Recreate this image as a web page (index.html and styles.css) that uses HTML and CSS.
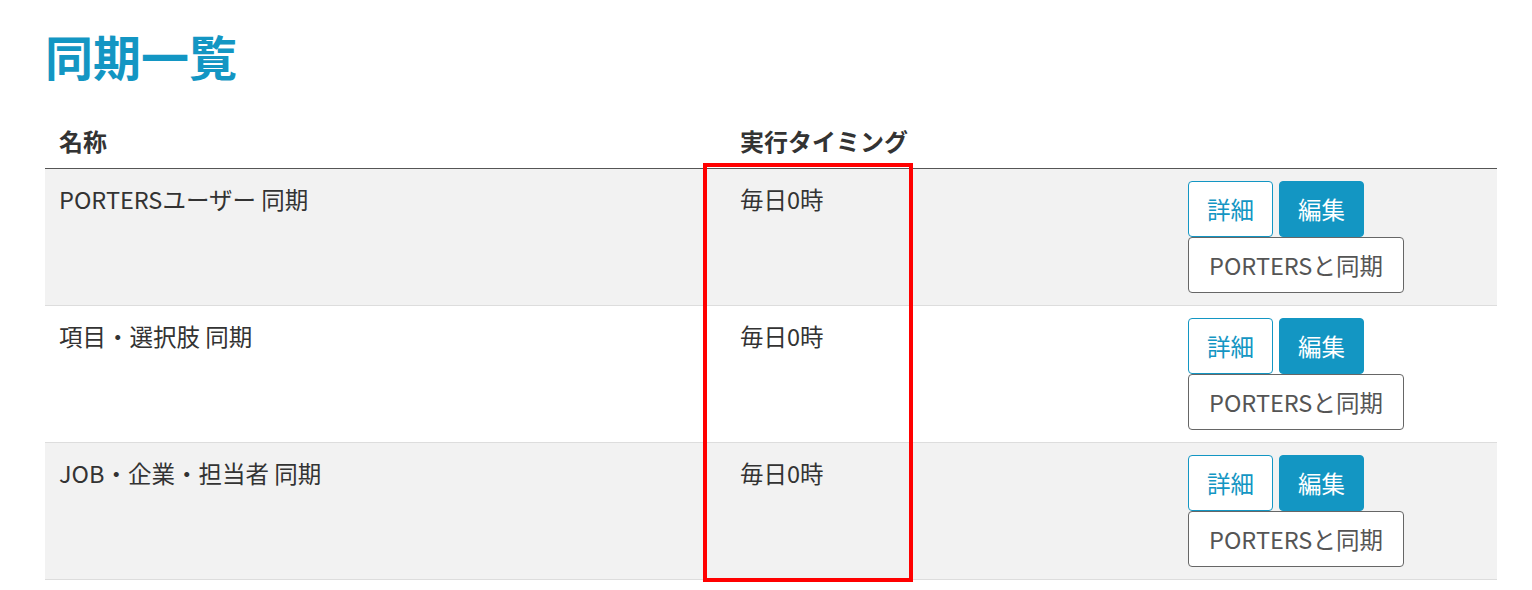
FILE: index.html
```html
<!DOCTYPE html>
<html lang="ja">
<head>
<meta charset="utf-8">
<link rel="stylesheet" href="styles.css">
</head>
<body>
<div class="page">
  <h1 class="title">同期一覧</h1>
  <table class="list">
    <colgroup><col class="c1"><col class="c2"><col class="c3"></colgroup>
    <thead>
      <tr><th>名称</th><th>実行タイミング</th><th></th></tr>
    </thead>
    <tbody>
      <tr class="odd">
        <td>PORTERSユーザー 同期</td><td>毎日0時</td>
        <td><div class="actions"><button class="btn btn-outline">詳細</button><button class="btn btn-primary">編集</button><button class="btn btn-default">PORTERSと同期</button></div></td>
      </tr>
      <tr>
        <td>項目・選択肢 同期</td><td>毎日0時</td>
        <td><div class="actions"><button class="btn btn-outline">詳細</button><button class="btn btn-primary">編集</button><button class="btn btn-default">PORTERSと同期</button></div></td>
      </tr>
      <tr class="odd">
        <td>JOB・企業・担当者 同期</td><td>毎日0時</td>
        <td><div class="actions"><button class="btn btn-outline">詳細</button><button class="btn btn-primary">編集</button><button class="btn btn-default">PORTERSと同期</button></div></td>
      </tr>
    </tbody>
  </table>
  <div class="highlight"></div>
</div>
</body>
</html>
```
FILE: styles.css
```css
* { box-sizing: border-box; }
body {
  margin: 0;
  font-family: "Noto Sans CJK JP", "Noto Sans", sans-serif;
  color: #333;
  background: #fff;
}
.page {
  position: relative;
  min-height: 590px;
  padding: 19px 35px 0 45px;
}
.title {
  margin: 0 0 29px 0;
  font-size: 48px;
  line-height: 72px;
  font-weight: 700;
  color: #1396c3;
}
.list {
  width: 1452px;
  border-collapse: collapse;
  table-layout: fixed;
}
.c1 { width: 681px; }
.c2 { width: 448px; }
.c3 { width: 323px; }
th {
  text-align: left;
  font-size: 24px;
  font-weight: 700;
  color: #333;
  padding: 6px 14px 12px;
  line-height: 30px;
  border-bottom: 1px solid #555;
}
td {
  font-size: 23.5px;
  line-height: 30px;
  vertical-align: top;
  padding: 15px 14px 10px;
  border-bottom: 1px solid #ddd;
  height: 137px;
}
td:last-child { padding-top: 12px; }
tr.odd td { background: #f2f2f2; }
.actions {
  display: flex;
  flex-wrap: wrap;
  width: 240px;
  gap: 0 6px;
}
.btn {
  font-family: inherit;
  font-size: 23.5px;
  line-height: 32px;
  padding: 11px 19px 11px;
  border-radius: 4px;
  background: #fff;
  cursor: pointer;
}
.btn-outline { border: 1px solid #1396c3; color: #1396c3; padding: 11px 18px; }
.btn-primary { border: 1px solid #1396c3; background: #1396c3; color: #fff; padding: 11px 18px; }
.btn-default { border: 1px solid #666; color: #555; padding: 11px 20px; }
.highlight {
  position: absolute;
  left: 703px;
  top: 163px;
  width: 210px;
  height: 419px;
  border: 4px solid #ff0000;
  pointer-events: none;
}
```
